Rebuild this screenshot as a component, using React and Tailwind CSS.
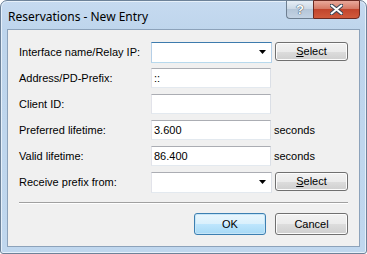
const Input = ({ value = '' }) => (
  <div className="w-[120px] h-[20px] border border-[#abadb3] border-l-[#e2e3ea] border-r-[#dbdfe6] border-b-[#e3e9ef] bg-white flex items-center px-[2px] text-[11px] text-black">
    {value}
  </div>
);

const Combo = ({ focused }) => (
  <div
    className={
      focused
        ? 'w-[121px] h-[21px] border border-[#3d7bad] border-l-[#b5cfe7] border-r-[#b5cfe7] border-b-[#b7d9ed] bg-white flex items-center justify-end pr-[5px]'
        : 'w-[121px] h-[21px] border border-[#abadb3] border-l-[#e2e3ea] border-r-[#dbdfe6] border-b-[#e3e9ef] bg-white flex items-center justify-end pr-[5px]'
    }
  >
    <svg width="7" height="4" viewBox="0 0 7 4">
      <path d="M0 0h7L3.5 4z" fill="#000" />
    </svg>
  </div>
);

const Button = ({ children, primary, className = '' }) => (
  <div
    className={
      (primary
        ? 'border-[#3c7fb1] bg-[linear-gradient(#eaf6fd_0%,#d9f0fc_50%,#bee6fd_50%,#a7d9f5_100%)] shadow-[inset_0_0_0_1px_#c6e5f7] '
        : 'border-[#707070] bg-[linear-gradient(#f2f2f2_0%,#ebebeb_50%,#dddddd_50%,#cfcfcf_100%)] shadow-[inset_0_0_0_1px_#fcfcfc] ') +
      'border rounded-[3px] flex items-center justify-center text-[11px] text-black ' +
      className
    }
  >
    {children}
  </div>
);

const Row = ({ label, children }) => (
  <div className="flex items-center h-[26px]">
    <div className="w-[132px] text-[11px] text-black leading-none">{label}</div>
    {children}
  </div>
);

export default function App() {
  return (
    <div
      className="w-[367px] h-[254px] bg-white"
      style={{ fontFamily: '"Liberation Sans", Arial, sans-serif' }}
    >
      <div className="w-[367px] h-[254px] rounded-t-[7px] rounded-b-[3px] border border-[#6d8299] bg-[linear-gradient(#c6daf0,#bed5ec_30px,#c0d7ee)] flex flex-col shadow-[inset_0_0_0_1px_#e6f0fa]">
        <div className="h-[28px] flex justify-between pl-[7px] pr-[6px]">
          <div className="pt-[7px] text-[12px] text-black" style={{ fontFamily: '"Noto Sans", sans-serif' }}>
            Reservations - New Entry
          </div>
          <div className="flex h-[19px] -mt-px">
            <div className="w-[27px] h-[19px] border border-[#6e7f91] border-r-0 rounded-bl-[4px] bg-[linear-gradient(#e6eef6_0%,#ccd9e6_45%,#b5c6d8_50%,#c3d3e4_100%)] flex items-center justify-center">
              <span className="text-[13px] font-bold text-white leading-none [text-shadow:0_0_1px_#2a3a4e,0_0_1px_#2a3a4e]">?</span>
            </div>
            <div className="w-[47px] h-[19px] border border-[#6b2a22] rounded-br-[4px] bg-[linear-gradient(#e9a99b_0%,#d67a66_45%,#c2452d_50%,#d05a3c_100%)] flex items-center justify-center">
              <svg width="13" height="11" viewBox="0 0 13 11">
                <path d="M1.5 1.5l10 8M11.5 1.5l-10 8" stroke="#3b4555" strokeWidth="4" strokeLinecap="round" />
                <path d="M1.5 1.5l10 8M11.5 1.5l-10 8" stroke="#fff" strokeWidth="2" strokeLinecap="round" />
              </svg>
            </div>
          </div>
        </div>
        <div className="flex-1 mx-[6px] mb-[6px] border border-[#8ca2ba] bg-[#f0f0f0] flex flex-col pl-[11px] pt-[9px]">
          <Row label="Interface name/Relay IP:">
            <Combo focused />
            <Button className="ml-[3px] w-[73px] h-[19px] -mt-px">
              <span><span className="underline">S</span>elect</span>
            </Button>
          </Row>
          <Row label="Address/PD-Prefix:">
            <Input value="::" />
          </Row>
          <Row label="Client ID:">
            <Input />
          </Row>
          <Row label="Preferred lifetime:">
            <Input value="3.600" />
            <span className="ml-[3px] text-[11px] text-black">seconds</span>
          </Row>
          <Row label="Valid lifetime:">
            <Input value="86.400" />
            <span className="ml-[3px] text-[11px] text-black">seconds</span>
          </Row>
          <Row label="Receive prefix from:">
            <Combo />
            <Button className="ml-[3px] w-[73px] h-[19px] -mt-px">
              <span><span className="underline">S</span>elect</span>
            </Button>
          </Row>
          <div className="mt-[7px] w-[329px] border-t border-[#a0a0a0] border-b border-b-white" />
          <div className="flex justify-end gap-[9px] mt-[9px] w-[329px]">
            <Button primary className="w-[72px] h-[22px]">OK</Button>
            <Button className="w-[73px] h-[22px]">Cancel</Button>
          </div>
        </div>
      </div>
    </div>
  );
}
